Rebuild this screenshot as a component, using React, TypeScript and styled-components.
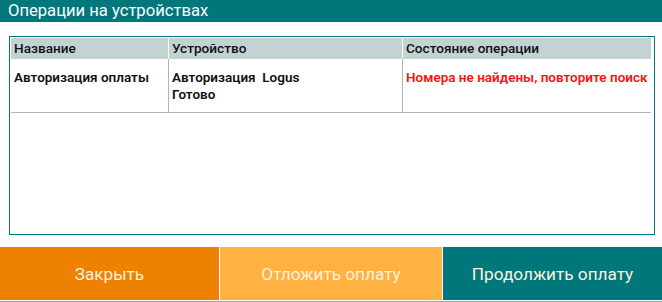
import styled, { createGlobalStyle } from 'styled-components';

const GlobalStyle = createGlobalStyle`
    html, body {
        margin: 0;
        padding: 0;
        background: #ffffff;
        font-family: Roboto, "Noto Sans", sans-serif;
    }
`;

const Page = styled.div`
    width: 662px;
    height: 302px;
    display: flex;
    flex-direction: column;
    overflow: hidden;
`;

const TitleBar = styled.div`
    height: 22px;
    background: #00777b;
    color: #ffffff;
    font-size: 16.6px;
    line-height: 21px;
    padding-left: 8px;
`;

const Panel = styled.div`
    margin: 14px 0 0 9px;
    width: 642px;
    height: 195px;
    border: 1px solid #00777b;
    padding: 1px;
    box-sizing: content-box;
`;

const Table = styled.div`
    display: grid;
    grid-template-columns: 158px 234px 1fr;
    width: 640px;
`;

const HeadCell = styled.div<{ $last?: boolean }>`
    background: #c3d3d3;
    height: 21px;
    line-height: 21px;
    font-size: 13.6px;
    font-weight: 500;
    color: #111;
    padding-left: 3px;
    border-right: ${(p) => (p.$last ? 'none' : '1px solid #ffffff')};
`;

const Cell = styled.div<{ $last?: boolean; $error?: boolean }>`
    height: 54px;
    padding: 10px 0 0 3px;
    box-sizing: border-box;
    font-size: 13.5px;
    font-weight: 600;
    line-height: 17px;
    color: ${(p) => (p.$error ? '#ff1010' : '#111')};
    border-right: ${(p) => (p.$last ? 'none' : '1px solid #b4b4b4')};
    border-bottom: 1px solid #b4b4b4;
`;

const Buttons = styled.div`
    margin-top: 12px;
    display: grid;
    grid-template-columns: 219px 222px 1fr;
    gap: 1px;
    height: 53px;
`;

const ActionButton = styled.button<{ $bg: string }>`
    border: none;
    margin: 0;
    background: ${(p) => p.$bg};
    color: #fff2de;
    font-family: Roboto, "Noto Sans", sans-serif;
    font-size: 17.2px;
    padding: 0;
`;

const StatusStrip = styled.div`
    margin-top: 1px;
    flex: 1;
    background: #c8cccc;
    border-top: 1px solid #9aa;
`;

export default function App() {
    return (
        <Page>
            <GlobalStyle />
            <TitleBar>Операции на устройствах</TitleBar>
            <Panel>
                <Table>
                    <HeadCell>Название</HeadCell>
                    <HeadCell>Устройство</HeadCell>
                    <HeadCell $last>Состояние операции</HeadCell>
                    <Cell>Авторизация оплаты</Cell>
                    <Cell>
                        Авторизация&nbsp; Logus
                        <br />
                        Готово
                    </Cell>
                    <Cell $last $error>Номера не найдены, повторите поиск</Cell>
                </Table>
            </Panel>
            <Buttons>
                <ActionButton $bg="#ee8100">Закрыть</ActionButton>
                <ActionButton $bg="#ffb142">Отложить оплату</ActionButton>
                <ActionButton $bg="#00777b">Продолжить оплату</ActionButton>
            </Buttons>
            <StatusStrip />
        </Page>
    );
}
